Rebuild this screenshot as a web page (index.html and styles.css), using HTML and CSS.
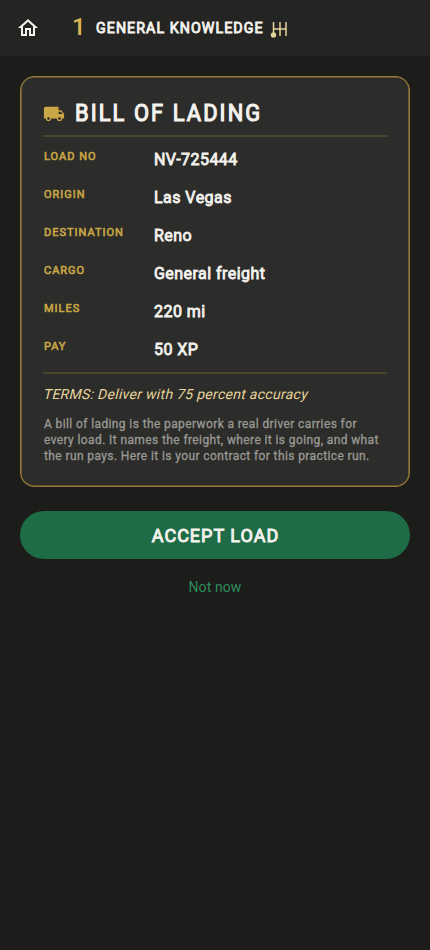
FILE: index.html
```html
<!DOCTYPE html>
<html lang="en">
<head>
<meta charset="utf-8">
<title>Bill of Lading</title>
<link rel="stylesheet" href="styles.css">
</head>
<body>
<header class="bar">
  <svg class="home" viewBox="0 0 24 24"><path d="M12 5.69l5 4.5V18h-2v-6H9v6H7v-7.81l5-4.5M12 3L2 12h3v8h6v-6h2v6h6v-8h3L12 3z"/></svg>
  <span class="num">1</span>
  <h1 class="heading">GENERAL KNOWLEDGE</h1>
  <svg class="shifter" viewBox="0 0 18 18"><path d="M3.500 2v12M10 2v14M16 2v14M3.500 9h12.500"/><circle cx="3.500" cy="15" r="2.700"/></svg>
</header>
<main class="content">
  <section class="card">
    <div class="title-row">
      <svg class="truck" viewBox="0 0 24 24"><path d="M20 8h-3V4H3c-1.1 0-2 .9-2 2v11h2c0 1.66 1.34 3 3 3s3-1.34 3-3h6c0 1.66 1.34 3 3 3s3-1.34 3-3h2v-5l-3-4zM6 18.500c-.83 0-1.500-.67-1.500-1.500s.67-1.500 1.500-1.500 1.500.67 1.500 1.500-.67 1.500-1.500 1.500zm13.500-9l1.960 2.500H17V9.500h2.500zm-1.500 9c-.83 0-1.500-.67-1.500-1.500s.67-1.500 1.500-1.500 1.500.67 1.500 1.500-.67 1.500-1.500 1.500z"/></svg>
      <h2 class="title">BILL OF LADING</h2>
    </div>
    <dl class="rows">
      <dt>LOAD NO</dt><dd>NV-725444</dd>
      <dt>ORIGIN</dt><dd>Las Vegas</dd>
      <dt>DESTINATION</dt><dd>Reno</dd>
      <dt>CARGO</dt><dd>General freight</dd>
      <dt>MILES</dt><dd>220 mi</dd>
      <dt>PAY</dt><dd>50 XP</dd>
    </dl>
    <p class="terms">TERMS: Deliver with 75 percent accuracy</p>
    <p class="note">A bill of lading is the paperwork a real driver carries for<br>every load. It names the freight, where it is going, and what<br>the run pays. Here it is your contract for this practice run.</p>
  </section>
  <button class="accept">ACCEPT LOAD</button>
  <button class="later">Not now</button>
</main>
</body>
</html>
```
FILE: styles.css
```css
* { box-sizing: border-box; margin: 0; padding: 0; }
body { min-height: 950px; background: #1c1c1a; font-family: Roboto, sans-serif; color: #f5f3ee; }
.bar { height: 56px; background: #242523; display: flex; align-items: center; padding-left: 16px; }
.home { width: 24px; height: 24px; fill: #f5f3ee; }
.num { margin-left: 32px; width: 24px; font-size: 24px; line-height: 28px; font-weight: 500; color: #dcb955; transform: translateY(-1px); }
.heading { width: 168px; white-space: nowrap; font-size: 15px; line-height: 20px; font-weight: 400; letter-spacing: 1.1px; -webkit-text-stroke: .9px; transform: scaleX(.95); transform-origin: left; }
.shifter { width: 18px; height: 18px; margin: 1px 0 0 6px; fill: #e6d49a; }
.shifter path { fill: none; stroke: #e6d49a; stroke-width: 1.5; }
.content { padding: 20px; }
.card { height: 411px; padding: 22px; border: 1.5px solid #967b3a; border-radius: 14px; background: #2c2c2a; box-shadow: inset 0 0 0 .6px #967b3a; }
.title-row { height: 38px; display: flex; align-items: center; padding-bottom: 7px; border-bottom: 2px solid #4d4530; }
.truck { width: 22px; height: 22px; margin: 1px 9px 0 0; fill: #c9a646; }
.title { margin-left: .5px; white-space: nowrap; font-size: 23px; line-height: 28px; font-weight: 400; letter-spacing: 2.2px; -webkit-text-stroke: 1.1px; transform: scaleX(.95); transform-origin: left; }
.rows { display: grid; grid-template-columns: 110px 1fr; grid-auto-rows: 38px; padding: 7px 0 0 1px; border-bottom: 2px solid #4d4530; height: 237px; }
.rows dt { padding-top: 6px; font-size: 11px; line-height: 14px; font-weight: 400; letter-spacing: 1px; color: #c9a646; -webkit-text-stroke: .6px; }
.rows dd { padding-top: 6px; font-size: 16px; line-height: 20px; font-weight: 400; letter-spacing: .45px; -webkit-text-stroke: .8px; }
.terms { margin: 10px 0 0 1px; font-size: 14px; line-height: 20px; letter-spacing: .28px; transform: skewX(-14deg); color: #e6d49a; }
.note { margin: 12px 0 0 1px; font-size: 12px; line-height: 16px; font-weight: 400; -webkit-text-stroke: .3px; letter-spacing: .39px; color: #9a9994; white-space: nowrap; }
button { display: block; width: 100%; border: 0; font-family: inherit; }
.accept { height: 48px; margin-top: 24px; padding-left: 1px; border-radius: 24px; background: #1d6c45; color: #f5f3ee; font-size: 18px; font-weight: 400; letter-spacing: 1px; -webkit-text-stroke: .9px; }
.later { height: 40px; margin-top: 8px; background: transparent; color: #2c8c5a; font-size: 14px; letter-spacing: .1px; }
```
